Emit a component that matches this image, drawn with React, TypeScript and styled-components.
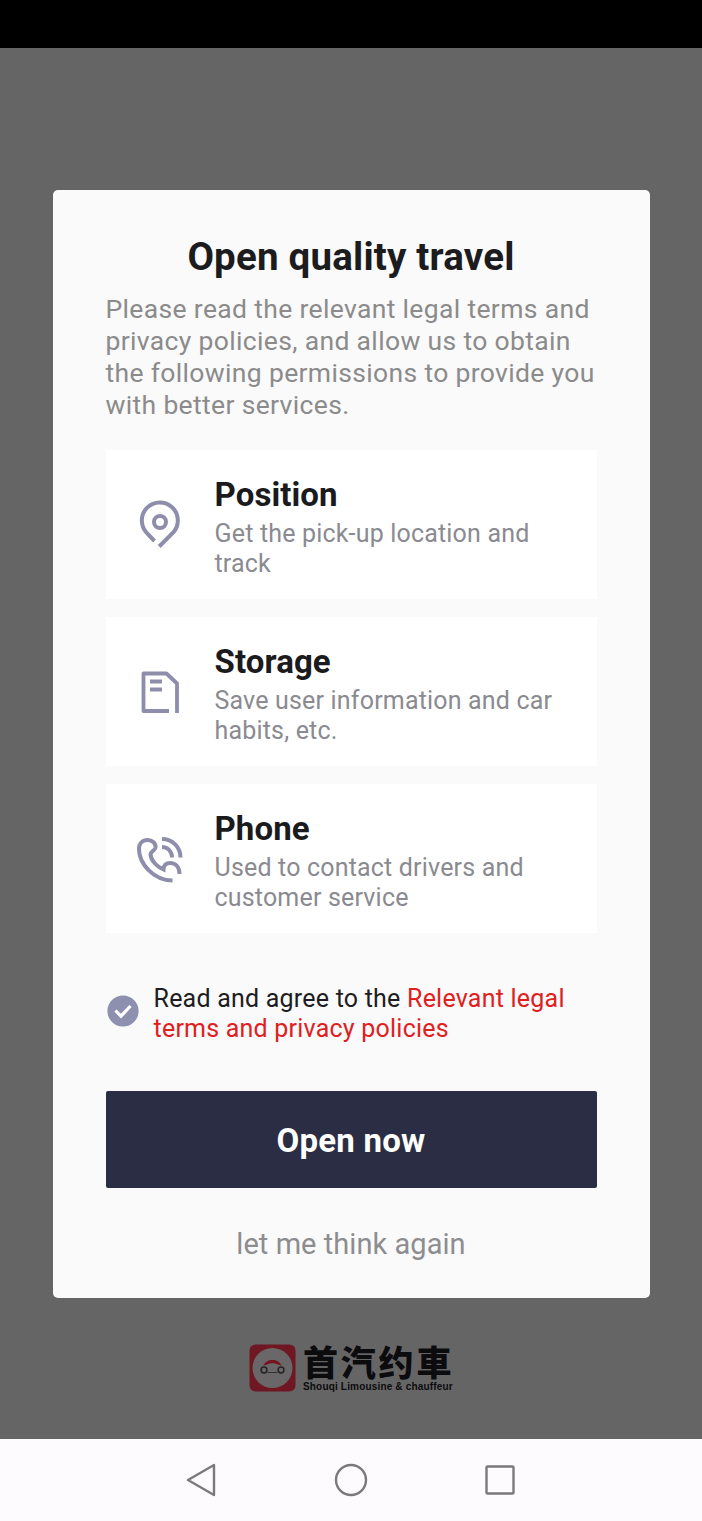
import React from "react";
import styled, { createGlobalStyle } from "styled-components";

const GlobalStyle = createGlobalStyle`
  *, *::before, *::after { box-sizing: border-box; }
  body { margin: 0; font-family: Roboto, "Noto Sans", sans-serif; background: #666; }
  h1, h2, p { margin: 0; }
  button { font-family: inherit; border: 0; padding: 0; cursor: pointer; }
`;

const Screen = styled.div`
  display: flex;
  flex-direction: column;
  width: 702px;
  height: 1521px;
  overflow: hidden;
`;

const StatusBar = styled.header`
  flex: 0 0 48px;
  background: #000;
`;

const Backdrop = styled.main`
  flex: 1;
  display: flex;
  flex-direction: column;
  align-items: center;
  padding-top: 142px;
  background: #666566;
`;

const Dialog = styled.section`
  display: flex;
  flex-direction: column;
  width: 597px;
  height: 1108px;
  padding: 44px 53px 0;
  border-radius: 5px;
  background: #fafafb;
`;

const Title = styled.h1`
  font-size: 38.5px;
  line-height: 46px;
  font-weight: 700;
  letter-spacing: 0.2px;
  text-align: center;
  white-space: nowrap;
  color: #1c1b1e;
`;

const Intro = styled.p`
  margin-top: 13px;
  font-size: 26.5px;
  line-height: 32px;
  letter-spacing: 0.34px;
  white-space: nowrap;
  color: #8b8b8b;
`;

const PermissionList = styled.div`
  display: flex;
  flex-direction: column;
  gap: 18px;
  margin-top: 29px;
`;

const PermissionCard = styled.article`
  display: flex;
  height: 149px;
  background: #fff;
`;

const IconSlot = styled.div`
  flex: 0 0 109px;
  display: flex;
  align-items: center;
  justify-content: center;
  color: #8e8eac;
`;

const PermissionText = styled.div`
  padding-top: 26px;
`;

const PermissionName = styled.h2`
  font-size: 33px;
  line-height: 38px;
  font-weight: 700;
  letter-spacing: 0.1px;
  color: #1b1a1d;
`;

const PermissionDetail = styled.p`
  margin-top: 5px;
  font-size: 25px;
  line-height: 30px;
  letter-spacing: 0.18px;
  white-space: nowrap;
  color: #8a8a91;
`;

const Agreement = styled.div`
  display: flex;
  align-items: flex-start;
  gap: 15px;
  margin-top: 51px;
  padding-left: 1px;
`;

const CheckSlot = styled.span`
  display: flex;
  padding-top: 11px;
`;

const AgreementText = styled.p`
  font-size: 25px;
  line-height: 30px;
  letter-spacing: 0.22px;
  white-space: nowrap;
  color: #1d1c20;
`;

const TermsLink = styled.span`
  color: #e0201d;
`;

const PrimaryButton = styled.button`
  height: 97px;
  margin-top: 47px;
  border-radius: 2px;
  background: #2a2d43;
  color: #fff;
  font-size: 33px;
  font-weight: 700;
  line-height: 40px;
  letter-spacing: 0.2px;
  padding-top: 3px;
`;

const TextButton = styled.button`
  align-self: center;
  margin-top: 38px;
  background: transparent;
  color: #8d8d8f;
  font-size: 29px;
  line-height: 36px;
  letter-spacing: 0.05px;
`;

const Brand = styled.div`
  display: flex;
  gap: 7px;
  width: 204px;
  margin-top: 46px;

  svg { flex: none; }
`;

const BrandText = styled.div`
  display: flex;
  flex-direction: column;
  color: #0c0b0d;
  white-space: nowrap;
`;

const BrandName = styled.span`
  height: 37px;
  font-family: "Noto Sans CJK SC", sans-serif;
  font-size: 35px;
  font-weight: 900;
  line-height: 33px;
  letter-spacing: 2.8px;
`;

const BrandTagline = styled.span`
  font-family: "Liberation Sans", sans-serif;
  font-size: 10px;
  font-weight: 700;
  line-height: 12px;
  letter-spacing: 0.17px;
`;

const NavigationBar = styled.nav`
  flex: 0 0 82px;
  display: flex;
  justify-content: center;
  align-items: center;
  gap: 109px;
  background: #fdfbfd;
  color: #7b797b;
`;

const PinIcon = () => (
  <svg width="48" height="56" viewBox="0 0 48 56" fill="none" stroke="currentColor" strokeWidth="4">
    <path d="M18.500 44 10.500 35.600A18 18 0 1 1 37.500 35.200L23.200 49.500" />
    <circle cx="24" cy="25" r="6" />
  </svg>
);

const DocumentIcon = () => (
  <svg width="48" height="56" viewBox="0 0 48 56" fill="none" stroke="currentColor" strokeWidth="3.800" strokeLinejoin="round">
    <path d="M33 47H7.500V9.500h23L41 19.500v29.500" />
    <path d="M14 17.500h12M14 25.500h12" />
  </svg>
);

const PhoneIcon = () => (
  <svg width="56" height="56" viewBox="0 0 56 56" fill="none" stroke="currentColor" strokeWidth="4">
    <path d="M40.500 49.500C22 49.500 7 33 7 18 7 12.500 10.500 9 15.500 9 20.500 9 24 12.500 23.500 16.500c-.5 3-5 4-5 7C19 30 25.500 36 31.500 38.500c0-4 2.500-6.500 6.500-6.500 5.500 0 9.500 4 9.500 11" />
    <path d="M30 16c5.800 0 10 4.500 10 10.500M30 8C40.500 8 48.500 16 48.500 26.500" />
  </svg>
);

const CheckIcon = () => (
  <svg width="32" height="32" viewBox="0 0 32 32">
    <circle cx="16" cy="16" r="15.600" fill="#8e90b0" />
    <path d="m8.500 15.500 5.500 5.700L23.500 11" fill="none" stroke="#fff" strokeWidth="3.200" />
  </svg>
);

const BrandMark = () => (
  <svg width="47" height="48" viewBox="0 0 47 48">
    <rect x="0.500" y="0.500" width="46" height="47" rx="6" fill="#6f1722" />
    <circle cx="23.500" cy="24" r="20" fill="#696768" />
    <path d="M14.500 21.500c2.500-7.500 15.500-7.500 18 0l-3.500-1c-3.500-2-7.500-2-11 0z" fill="#74121e" />
    <g fill="none" stroke="#252326" strokeWidth="1.500">
      <circle cx="15" cy="26" r="2.900" />
      <circle cx="32" cy="26" r="2.900" />
      <path d="M18.500 28.500h10" strokeWidth="0.800" />
    </g>
  </svg>
);

const permissions = [
  { name: "Position", lines: ["Get the pick-up location and", "track"], icon: <PinIcon /> },
  { name: "Storage", lines: ["Save user information and car", "habits, etc."], icon: <DocumentIcon /> },
  { name: "Phone", lines: ["Used to contact drivers and", "customer service"], icon: <PhoneIcon /> },
];

export default function App() {
  return (
    <>
      <GlobalStyle />
      <Screen>
        <StatusBar />
        <Backdrop>
          <Dialog>
            <Title>Open quality travel</Title>
            <Intro>
              Please read the relevant legal terms and<br />
              privacy policies, and allow us to obtain<br />
              the following permissions to provide you<br />
              with better services.
            </Intro>
            <PermissionList>
              {permissions.map(({ name, lines, icon }) => (
                <PermissionCard key={name}>
                  <IconSlot>{icon}</IconSlot>
                  <PermissionText>
                    <PermissionName>{name}</PermissionName>
                    <PermissionDetail>{lines[0]}<br />{lines[1]}</PermissionDetail>
                  </PermissionText>
                </PermissionCard>
              ))}
            </PermissionList>
            <Agreement>
              <CheckSlot><CheckIcon /></CheckSlot>
              <AgreementText>
                Read and agree to the <TermsLink>Relevant legal<br />terms and privacy policies</TermsLink>
              </AgreementText>
            </Agreement>
            <PrimaryButton>Open now</PrimaryButton>
            <TextButton>let me think again</TextButton>
          </Dialog>
          <Brand>
            <BrandMark />
            <BrandText>
              <BrandName>首汽约車</BrandName>
              <BrandTagline>Shouqi Limousine &amp; chauffeur</BrandTagline>
            </BrandText>
          </Brand>
        </Backdrop>
        <NavigationBar>
          <svg width="40" height="40" viewBox="0 0 40 40" fill="none" stroke="currentColor" strokeWidth="2.400" strokeLinejoin="round">
            <path d="M32 5v30L6 20z" />
          </svg>
          <svg width="40" height="40" viewBox="0 0 40 40" fill="none" stroke="currentColor" strokeWidth="2.400">
            <circle cx="20" cy="20" r="15" />
          </svg>
          <svg width="40" height="40" viewBox="0 0 40 40" fill="none" stroke="currentColor" strokeWidth="2.400">
            <rect x="6.500" y="6.500" width="27" height="27" rx="1" />
          </svg>
        </NavigationBar>
      </Screen>
    </>
  );
}
